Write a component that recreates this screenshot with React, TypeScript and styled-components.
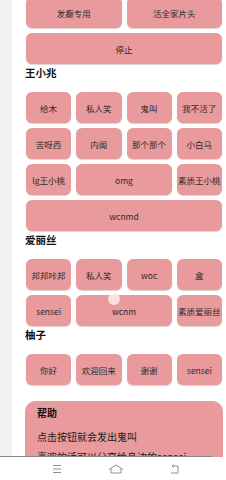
import React from 'react';
import styled, { createGlobalStyle } from 'styled-components';

const GlobalStyle = createGlobalStyle`
  html, body {
    margin: 0;
    padding: 0;
    background: #ffffff;
  }
  body {
    font-family: "Noto Sans CJK SC", "Noto Sans", sans-serif;
    color: #2b2b2b;
  }
`;

const Screen = styled.div`
  width: 226px;
  height: 480px;
  display: flex;
  flex-direction: column;
  overflow: hidden;
  position: relative;
`;

const Body = styled.div`
  flex: 1;
  display: flex;
  overflow: hidden;
`;

const SideStrip = styled.div`
  width: 12px;
  flex-shrink: 0;
  background: #f1f1f1;
`;

const Content = styled.div`
  flex: 1;
  padding: 0 4px 0 14px;
  margin-top: -3px;
  display: flex;
  flex-direction: column;
`;

const Grid = styled.div<{ cols: number }>`
  display: grid;
  grid-template-columns: repeat(${p => p.cols}, 1fr);
  gap: 5px;
`;

const Btn = styled.button<{ span?: number }>`
  grid-column: span ${p => p.span || 1};
  height: 31px;
  border: none;
  border-radius: 6px;
  background: #e89a9c;
  box-shadow: 0 1px 1px rgba(120, 60, 60, 0.25);
  font-family: "Noto Sans CJK SC", "Noto Sans", sans-serif;
  font-size: 8.5px;
  color: #2e2a2a;
  padding: 0;
  white-space: nowrap;
  overflow: hidden;
`;

const Heading = styled.div`
  font-size: 10.5px;
  font-weight: 700;
  line-height: 14px;
  margin: 2px 0 12px -1px;
  color: #111;
`;

const HelpCard = styled.div`
  margin: 16px -1px 0 -1px;
  background: #e89a9c;
  border-radius: 10px;
  padding: 5px 12px 10px 12px;
  display: flex;
  flex-direction: column;
`;

const HelpTitle = styled.div`
  font-size: 10px;
  font-weight: 700;
  line-height: 14px;
  color: #111;
`;

const HelpLine = styled.div<{ top: number }>`
  font-size: 10px;
  line-height: 14px;
  margin-top: ${p => p.top}px;
  color: #1e1a1a;
`;

const NavBar = styled.div`
  height: 23px;
  flex-shrink: 0;
  background: #fff;
  position: relative;
  display: flex;
  align-items: center;
  gap: 45px;
  padding-left: 51px;

  &::before {
    content: '';
    position: absolute;
    left: 0;
    top: -1px;
    width: 212px;
    height: 1px;
    background: #8a8a8a;
  }
`;

const NavIcon = styled.svg<{ w: number }>`
  width: ${p => p.w}px;
  height: 10px;
  stroke: #8e8e8e;
  fill: none;
  stroke-width: 1;
  flex-shrink: 0;
`;

const Touch = styled.div`
  position: absolute;
  left: 108px;
  top: 293px;
  width: 12px;
  height: 12px;
  border-radius: 50%;
  background: rgba(255, 240, 240, 0.8);
`;

const sections = [
  {
    name: '王小兆',
    rows: [
      [{ t: '给木' }, { t: '私人笑' }, { t: '鬼叫' }, { t: '我不活了' }],
      [{ t: '苦呀西' }, { t: '内阁' }, { t: '那个那个' }, { t: '小白马' }],
      [{ t: 'lg王小桃' }, { t: 'omg', s: 2 }, { t: '素质王小桃' }],
      [{ t: 'wcnmd', s: 4 }]
    ]
  },
  {
    name: '爱丽丝',
    rows: [
      [{ t: '邦邦咔邦' }, { t: '私人笑' }, { t: 'woc' }, { t: '盒' }],
      [{ t: 'sensei' }, { t: 'wcnm', s: 2 }, { t: '素质爱丽丝' }]
    ]
  },
  {
    name: '柚子',
    rows: [[{ t: '你好' }, { t: '欢迎回来' }, { t: '谢谢' }, { t: 'sensei' }]]
  }
];

export default function App() {
  return (
    <Screen>
      <GlobalStyle />
      <Body>
        <SideStrip />
        <Content>
          <Grid cols={2}>
            <Btn>发癫专用</Btn>
            <Btn>活全家片头</Btn>
            <Btn span={2}>停止</Btn>
          </Grid>
          {sections.map(sec => (
            <React.Fragment key={sec.name}>
              <Heading>{sec.name}</Heading>
              <Grid cols={4}>
                {sec.rows.flat().map((b, i) => (
                  <Btn key={i} span={(b as any).s}>
                    {b.t}
                  </Btn>
                ))}
              </Grid>
            </React.Fragment>
          ))}
          <HelpCard>
            <HelpTitle>帮助</HelpTitle>
            <HelpLine top={10}>点击按钮就会发出鬼叫</HelpLine>
            <HelpLine top={6}>喜欢的话可以分享给身边的sensei</HelpLine>
          </HelpCard>
        </Content>
      </Body>
      <NavBar>
        <NavIcon w={12} viewBox="0 0 12 10">
          <path d="M2 1.5h8M2 5h8M2 8.5h8" />
        </NavIcon>
        <NavIcon w={16} viewBox="0 0 16 10">
          <path d="M1 5.5L8 1l7 4.5M3 5v4h10V5" />
        </NavIcon>
        <NavIcon w={12} viewBox="0 0 12 10">
          <path d="M3 2h6v7H2M3 2l1.5-1.5M3 2l1.5 1.5" />
        </NavIcon>
      </NavBar>
      <Touch />
    </Screen>
  );
}
